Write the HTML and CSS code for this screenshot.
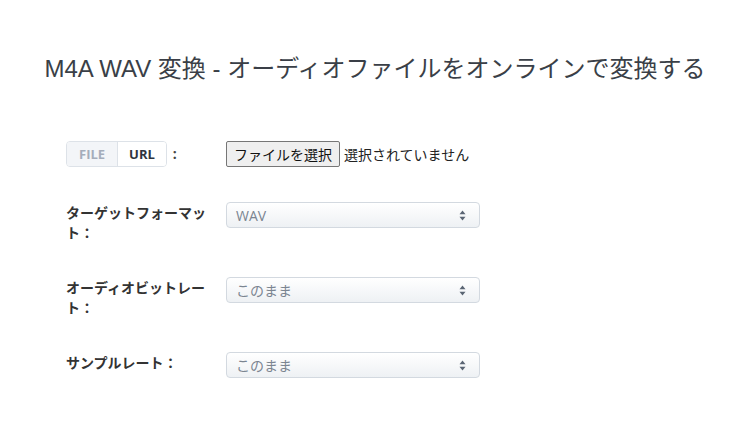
FILE: index.html
```html
<!DOCTYPE html>
<html lang="ja">
<head>
<meta charset="utf-8">
<link rel="stylesheet" href="styles.css">
</head>
<body>
<div class="page">
  <h1 class="title">M4A WAV 変換 - オーディオファイルをオンラインで変換する</h1>
  <div class="form">
    <div class="row row-file">
      <div class="label">
        <span class="seg"><span class="seg-btn seg-off">FILE</span><span class="seg-btn seg-on">URL</span></span>
        <span class="colon">:</span>
      </div>
      <div class="field">
        <span class="file-btn">ファイルを選択</span><span class="file-none">選択されていません</span>
      </div>
    </div>
    <div class="row">
      <div class="label">ターゲットフォーマット：</div>
      <div class="field"><div class="select"><span class="sel-text">WAV</span><span class="arrows"><svg width="7" height="11" viewBox="0 0 7 11"><path d="M3.5 0.5 L6.5 4.3 L0.5 4.3 Z" fill="#5a6573"/><path d="M3.5 10.5 L6.5 6.7 L0.5 6.7 Z" fill="#5a6573"/></svg></span></div></div>
    </div>
    <div class="row">
      <div class="label">オーディオビットレート：</div>
      <div class="field"><div class="select"><span class="sel-text">このまま</span><span class="arrows"><svg width="7" height="11" viewBox="0 0 7 11"><path d="M3.5 0.5 L6.5 4.3 L0.5 4.3 Z" fill="#5a6573"/><path d="M3.5 10.5 L6.5 6.7 L0.5 6.7 Z" fill="#5a6573"/></svg></span></div></div>
    </div>
    <div class="row">
      <div class="label">サンプルレート：</div>
      <div class="field"><div class="select"><span class="sel-text">このまま</span><span class="arrows"><svg width="7" height="11" viewBox="0 0 7 11"><path d="M3.5 0.5 L6.5 4.3 L0.5 4.3 Z" fill="#5a6573"/><path d="M3.5 10.5 L6.5 6.7 L0.5 6.7 Z" fill="#5a6573"/></svg></span></div></div>
    </div>
  </div>
</div>
</body>
</html>
```
FILE: styles.css
```css
html, body {
  margin: 0;
  padding: 0;
  background: #ffffff;
}
body {
  font-family: "Liberation Sans", "Noto Sans CJK JP", sans-serif;
  color: #333;
}
.page {
  width: 750px;
  height: 435px;
  overflow: hidden;
}
.title {
  margin: 0;
  padding-top: 52px;
  height: 34px;
  font-size: 24px;
  font-weight: 400;
  line-height: 34px;
  text-align: center;
  color: #3a3f47;
  white-space: nowrap;
}
.form {
  padding-left: 66px;
  padding-top: 55px;
  display: flex;
  flex-direction: column;
}
.row {
  display: flex;
  align-items: flex-start;
  height: 75px;
}
.row-file {
  height: 61px;
}
.label {
  width: 150px;
  margin-right: 10px;
  font-family: "Noto Sans CJK JP", sans-serif;
  font-size: 14px;
  font-weight: 700;
  line-height: 20px;
  color: #333;
}
.row-file .label {
  display: flex;
  align-items: center;
  height: 26px;
}
.seg {
  display: inline-flex;
  border: 1px solid #dde2e8;
  border-radius: 4px;
  overflow: hidden;
  height: 24px;
}
.seg-btn {
  display: flex;
  align-items: center;
  font-family: "Open Sans", sans-serif;
  font-size: 13px;
  font-weight: 700;
  padding: 0 11px;
}
.seg-off {
  background: #f3f5f8;
  color: #a5adbb;
  border-right: 1px solid #dde2e8;
  padding: 0 12px;
}
.seg-on {
  background: #ffffff;
  color: #2e3440;
}
.colon {
  margin-left: 6px;
  font-family: "Open Sans", sans-serif;
  font-size: 14px;
  font-weight: 700;
  color: #444;
}
.field {
  display: flex;
  align-items: center;
  padding-top: 1px;
}
.row-file .field {
  padding-top: 1px;
}
.file-btn {
  display: inline-block;
  height: 24px;
  line-height: 24px;
  padding: 0 7px;
  border: 1px solid #767676;
  border-radius: 2px;
  background: #efefef;
  font-family: "Noto Sans CJK JP", sans-serif;
  font-size: 14px;
  color: #111;
}
.file-none {
  margin-left: 4px;
  font-family: "Noto Sans CJK JP", sans-serif;
  font-size: 14px;
  color: #222;
}
.row .field {
  padding-top: 0;
}
.select {
  width: 230px;
  height: 24px;
  border: 1px solid #d3d9e0;
  border-radius: 4px;
  background: linear-gradient(#ffffff, #eef1f4);
  display: flex;
  align-items: center;
  justify-content: space-between;
  padding: 0 13px 0 9px;
}
.sel-text {
  font-size: 14px;
  color: #7b8591;
}
.sel-text {
  font-family: "Open Sans", "Noto Sans CJK JP", sans-serif;
}
.arrows {
  display: flex;
}
```
